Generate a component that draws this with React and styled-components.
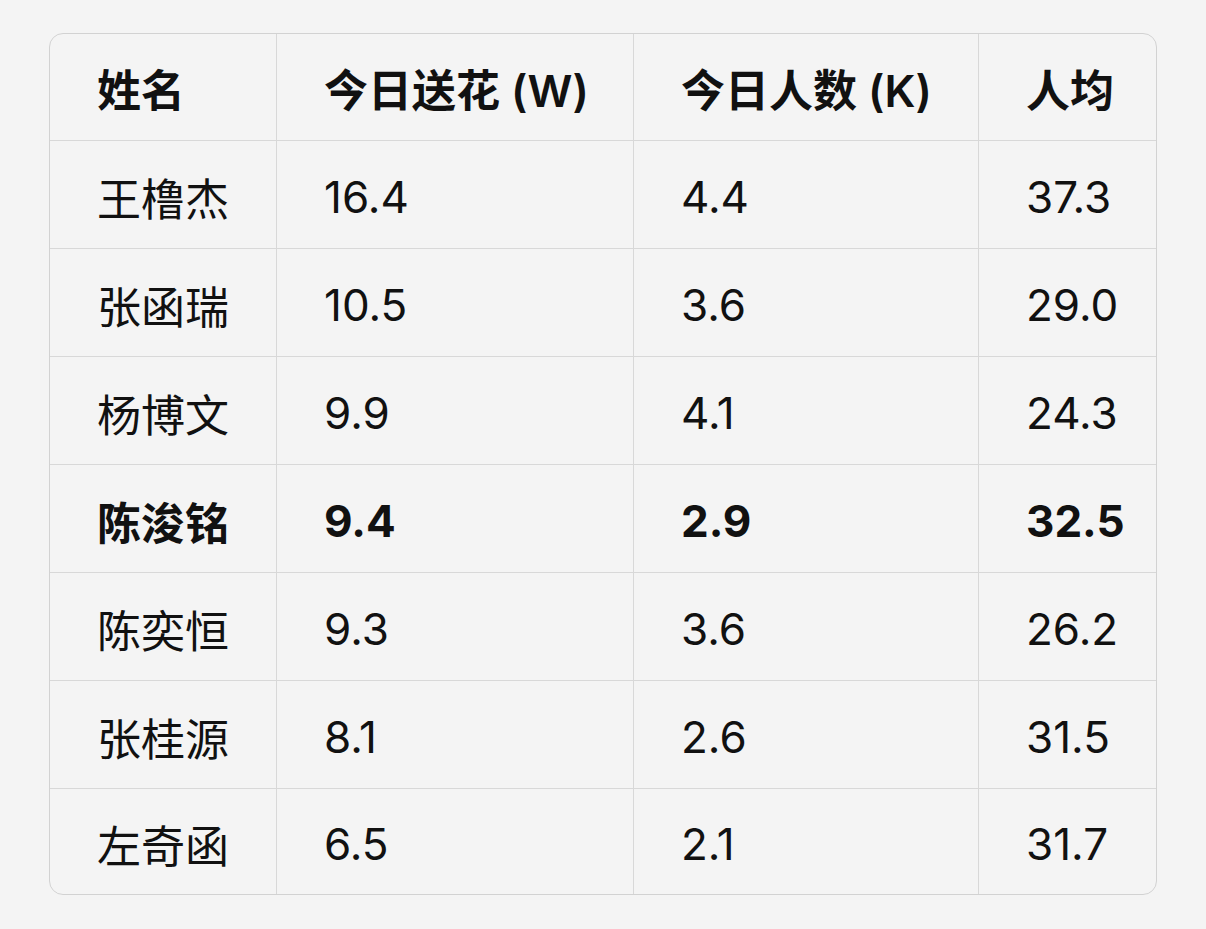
import React from 'react';
import styled, { createGlobalStyle } from 'styled-components';

const GlobalStyle = createGlobalStyle`
  html, body {
    margin: 0;
    background: #f4f4f4;
  }
  body {
    font-family: "Inter", "Noto Sans CJK SC", sans-serif;
    color: #111;
  }
`;

const Page = styled.div`
  padding: 33px 0 0 49px;
`;

const Board = styled.div`
  width: 1108px;
  box-sizing: border-box;
  border: 1px solid #d2d2d2;
  border-radius: 14px;
  overflow: hidden;
  display: grid;
  grid-template-columns: 227px 357px 345px 177px;
  grid-template-rows: 107px repeat(6, 108px) 105px;
`;

const Cell = styled.div`
  box-sizing: border-box;
  display: flex;
  align-items: center;
  padding: 5px 0 0 47px;
  font-size: 44px;
  font-weight: ${p => (p.$bold ? 700 : 400)};
  border-right: ${p => (p.$last ? 'none' : '1px solid #d8d8d8')};
  border-bottom: ${p => (p.$bottom ? 'none' : '1px solid #d8d8d8')};
  white-space: nowrap;
`;

const HeadCell = styled(Cell)`
  font-weight: 600;
  padding-top: 2px;
`;

const columns = ['姓名', '今日送花 (W)', '今日人数 (K)', '人均'];

const rows = [
  ['王橹杰', '16.4', '4.4', '37.3'],
  ['张函瑞', '10.5', '3.6', '29.0'],
  ['杨博文', '9.9', '4.1', '24.3'],
  ['陈浚铭', '9.4', '2.9', '32.5', true],
  ['陈奕恒', '9.3', '3.6', '26.2'],
  ['张桂源', '8.1', '2.6', '31.5'],
  ['左奇函', '6.5', '2.1', '31.7'],
];

export default function App() {
  return (
    <>
      <GlobalStyle />
      <Page>
        <Board role="table">
          {columns.map((c, i) => (
            <HeadCell key={c} role="columnheader" $last={i === 3}>
              {c}
            </HeadCell>
          ))}
          {rows.map((r, ri) =>
            r.slice(0, 4).map((v, ci) => (
              <Cell
                key={ri + '-' + ci}
                role="cell"
                $bold={r[4]}
                $last={ci === 3}
                $bottom={ri === rows.length - 1}
              >
                {v}
              </Cell>
            ))
          )}
        </Board>
      </Page>
    </>
  );
}
